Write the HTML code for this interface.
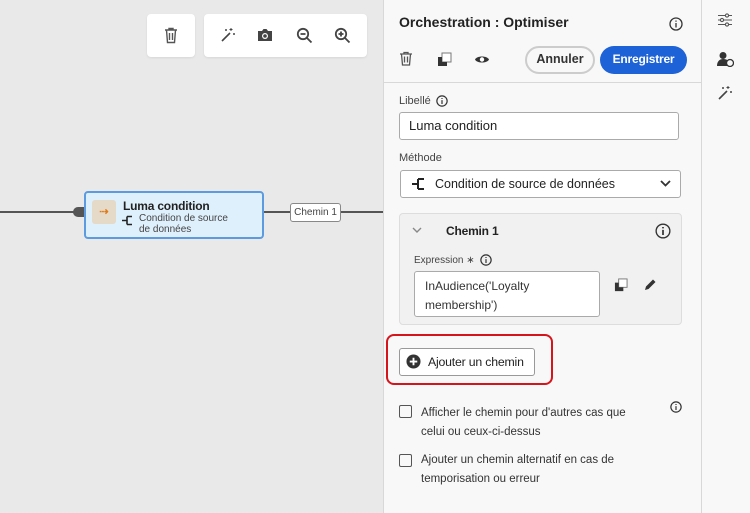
<!DOCTYPE html>
<html><head><meta charset="utf-8"><style>
*{box-sizing:border-box;margin:0;padding:0}
body{width:750px;height:513px;overflow:hidden;background:#e9e9e9;font-family:"Liberation Sans",sans-serif;color:#222;position:relative}
.a{position:absolute}
svg{display:block}
.box{background:#fff;border-radius:4px;box-shadow:0 1px 2px rgba(0,0,0,.08)}
.lbl{font-size:11px;color:#444}
.inp{background:#fff;border:1px solid #aaa;border-radius:3px}
.t13{font-size:13px;color:#222}
</style></head><body>
<div class="a box" style="left:147px;top:14px;width:48px;height:43px"></div>
<div class="a box" style="left:204px;top:14px;width:163px;height:43px"></div>
<svg class="a" style="left:163px;top:27px" width="16" height="17" viewBox="0 0 16 17" fill="none" stroke="#555" stroke-width="1.4"><path d="M2 3h12M6 3V1.5h4V3M3.5 3l1 12.5h7l1-12.5M6.5 6v7M9.5 6v7"/></svg>
<svg class="a" style="left:220px;top:27px" width="16" height="16" viewBox="0 0 16 16" fill="none" stroke="#444" stroke-width="1.6"><path d="M2 14L10 6"/><path d="M11 1v3M9.5 2.5h3M14 6v2M13 7h2M6 2v2M5 3h2" stroke-width="1"/></svg>
<svg class="a" style="left:257px;top:28px" width="16" height="14" viewBox="0 0 16 14"><path d="M1 3h4l1.5-2h3L11 3h4v10H1z" fill="#444"/><circle cx="8" cy="8" r="3" fill="#fff"/><circle cx="8" cy="8" r="1.8" fill="#444"/></svg>
<svg class="a" style="left:296px;top:27px" width="17" height="17" viewBox="0 0 17 17" fill="none" stroke="#444" stroke-width="1.8"><circle cx="7" cy="7" r="5.2"/><path d="M11 11l4.5 4.5M4.5 7h5"/></svg>
<svg class="a" style="left:334px;top:27px" width="17" height="17" viewBox="0 0 17 17" fill="none" stroke="#444" stroke-width="1.8"><circle cx="7" cy="7" r="5.2"/><path d="M11 11l4.5 4.5M4.5 7h5M7 4.5v5"/></svg>
<div class="a" style="left:0;top:211px;width:84px;height:2px;background:#555"></div>
<div class="a" style="left:263px;top:211px;width:120px;height:2px;background:#555"></div>
<div class="a" style="left:73px;top:207px;width:11px;height:10px;background:#555;border-radius:5px 0 0 5px"></div>
<div class="a" style="left:84px;top:191px;width:180px;height:48px;background:#dff0fd;border:2px solid #5d9be0;border-radius:4px"></div>
<div class="a" style="left:92px;top:200px;width:24px;height:24px;background:#e5d9c8;border-radius:3px;color:#e07b1a;font-size:11px;text-align:center;line-height:24px;font-weight:bold">⇢</div>
<div class="a" style="left:123px;top:199px;font-size:12px;font-weight:bold;color:#222;letter-spacing:-.2px">Luma condition</div>
<div class="a" style="left:139px;top:213px;font-size:10px;color:#444;line-height:11px">Condition de source<br>de données</div>
<svg class="a" style="left:122px;top:215px" width="12" height="11" viewBox="0 0 12 11" fill="none" stroke="#222" stroke-width="1.6"><path d="M0 5.5h5M5 1.5h5M5 9.5h5M5 1.5v8"/></svg>
<div class="a" style="left:290px;top:203px;width:51px;height:19px;background:#fff;border:1px solid #888;border-radius:3px;font-size:10px;color:#444;text-align:center;line-height:17px">Chemin 1</div>
<div class="a" style="left:383px;top:0;width:319px;height:513px;background:#f8f8f8;border-left:1px solid #d8d8d8"></div>
<div class="a" style="left:701px;top:0;width:49px;height:513px;background:#f8f8f8;border-left:1px solid #d8d8d8"></div>
<div class="a" style="left:399px;top:14px;font-size:14px;font-weight:bold;color:#222">Orchestration : Optimiser</div>
<svg class="a" style="left:669px;top:17px" width="14" height="14" viewBox="0 0 14 14" fill="none" stroke="#333" stroke-width="1.3"><circle cx="7" cy="7" r="6"/><path d="M7 6v4.5M7 3.5v1.2"/></svg>
<svg class="a" style="left:399px;top:51px" width="14" height="15" viewBox="0 0 14 15" fill="none" stroke="#555" stroke-width="1.3"><path d="M1 3h12M5 3V1.5h4V3M2.5 3l1 11h7l1-11M5.5 5.5v6M8.5 5.5v6"/></svg>
<svg class="a" style="left:437px;top:52px" width="15" height="15" viewBox="0 0 15 15"><rect x="5" y="1" width="9" height="9" fill="#fff" stroke="#777"/><path d="M1 5h4v5h5v4H1z" fill="#333"/></svg>
<svg class="a" style="left:474px;top:54px" width="16" height="11" viewBox="0 0 16 11"><path d="M1 5.5C3 1.5 13 1.5 15 5.5 13 9.5 3 9.5 1 5.5z" fill="#333"/><circle cx="8" cy="5.5" r="2.2" fill="#fff"/></svg>
<div class="a" style="left:525px;top:46px;width:70px;height:28px;border:2px solid #ccc;border-radius:14px;font-size:12.5px;font-weight:bold;color:#333;text-align:center;line-height:23px">Annuler</div>
<div class="a" style="left:600px;top:46px;width:87px;height:28px;background:#1d62d6;border-radius:14px;font-size:12px;font-weight:bold;color:#fff;text-align:center;line-height:27px;letter-spacing:-.2px">Enregistrer</div>
<div class="a" style="left:384px;top:82px;width:317px;height:1px;background:#d8d8d8"></div>
<div class="a lbl" style="left:399px;top:95px">Libellé</div>
<svg class="a" style="left:436px;top:95px" width="12" height="12" viewBox="0 0 14 14" fill="none" stroke="#333" stroke-width="1.4"><circle cx="7" cy="7" r="6"/><path d="M7 6v4.5M7 3.5v1.2"/></svg>
<div class="a inp" style="left:399px;top:112px;width:280px;height:28px"></div>
<div class="a t13" style="left:409px;top:118px">Luma condition</div>
<div class="a lbl" style="left:399px;top:152px">Méthode</div>
<div class="a inp" style="left:400px;top:170px;width:281px;height:28px"></div>
<svg class="a" style="left:412px;top:177px" width="14" height="14" viewBox="0 0 14 14" fill="none" stroke="#222" stroke-width="2"><path d="M0 7h6M6 2h6M6 12h6M6 2v10"/></svg>
<div class="a t13" style="left:435px;top:177px;font-size:12.5px">Condition de source de données</div>
<svg class="a" style="left:660px;top:180px" width="11" height="7" viewBox="0 0 11 7" fill="none" stroke="#333" stroke-width="1.8"><path d="M1 1l4.5 4.5L10 1"/></svg>
<div class="a" style="left:399px;top:213px;width:283px;height:112px;background:#f1f1f1;border:1px solid #ddd;border-radius:4px"></div>
<svg class="a" style="left:412px;top:227px" width="10" height="6" viewBox="0 0 10 6" fill="none" stroke="#888" stroke-width="1.4"><path d="M1 1l4 4 4-4"/></svg>
<div class="a" style="left:446px;top:224px;font-size:12px;font-weight:bold;letter-spacing:-.2px">Chemin 1</div>
<svg class="a" style="left:655px;top:223px" width="16" height="16" viewBox="0 0 14 14" fill="none" stroke="#333" stroke-width="1.2"><circle cx="7" cy="7" r="6"/><path d="M7 6v4.5M7 3.5v1.2" stroke-width="1.5"/></svg>
<div class="a" style="left:414px;top:255px;font-size:10px;color:#444">Expression ∗</div>
<svg class="a" style="left:480px;top:254px" width="12" height="12" viewBox="0 0 14 14" fill="none" stroke="#333" stroke-width="1.4"><circle cx="7" cy="7" r="6"/><path d="M7 6v4.5M7 3.5v1.2"/></svg>
<div class="a inp" style="left:414px;top:271px;width:186px;height:46px"></div>
<div class="a" style="left:425px;top:277px;font-size:12px;line-height:19px;color:#333">InAudience('Loyalty<br>membership')</div>
<svg class="a" style="left:614px;top:278px" width="14" height="14" viewBox="0 0 15 15"><rect x="5" y="1" width="9" height="9" fill="#fff" stroke="#777"/><path d="M1 5h4v5h5v4H1z" fill="#333"/></svg>
<svg class="a" style="left:643px;top:278px" width="14" height="14" viewBox="0 0 14 14"><path d="M2 12l1-3.5 7-7 2.5 2.5-7 7z" fill="#333"/></svg>
<div class="a" style="left:386px;top:334px;width:167px;height:51px;border:2px solid #d6141c;border-radius:8px"></div>
<div class="a" style="left:399px;top:348px;width:136px;height:28px;background:#fff;border:1px solid #999;border-radius:3px"></div>
<svg class="a" style="left:406px;top:354px" width="15" height="15" viewBox="0 0 16 16"><circle cx="8" cy="8" r="7.5" fill="#333"/><path d="M8 4v8M4 8h8" stroke="#fff" stroke-width="2"/></svg>
<div class="a t13" style="left:428px;top:355px;font-size:12.3px;letter-spacing:-.2px">Ajouter un chemin</div>
<div class="a" style="left:399px;top:405px;width:13px;height:13px;border:1.5px solid #555;border-radius:2px"></div>
<div class="a" style="left:421px;top:404px;font-size:11.5px;line-height:19px;color:#333">Afficher le chemin pour d'autres cas que<br>celui ou ceux-ci-dessus</div>
<svg class="a" style="left:670px;top:401px" width="12" height="12" viewBox="0 0 14 14" fill="none" stroke="#333" stroke-width="1.4"><circle cx="7" cy="7" r="6"/><path d="M7 6v4.5M7 3.5v1.2"/></svg>
<div class="a" style="left:399px;top:454px;width:13px;height:13px;border:1.5px solid #555;border-radius:2px"></div>
<div class="a" style="left:421px;top:451px;font-size:11.5px;line-height:19px;color:#333">Ajouter un chemin alternatif en cas de<br>temporisation ou erreur</div>
<svg class="a" style="left:717px;top:13px" width="16" height="14" viewBox="0 0 16 14" fill="none" stroke="#555" stroke-width="1.1"><path d="M1 2.5h14M1 7h14M1 11.5h14"/><circle cx="10" cy="2.5" r="1.6" fill="#f8f8f8"/><circle cx="5" cy="7" r="1.6" fill="#f8f8f8"/><circle cx="10" cy="11.5" r="1.6" fill="#f8f8f8"/></svg>
<svg class="a" style="left:717px;top:51px" width="17" height="16" viewBox="0 0 17 16"><circle cx="6" cy="4.5" r="3.5" fill="#333"/><path d="M0 15c0-5 3-7 6-7s5 1 6 3v4z" fill="#333"/><circle cx="13" cy="12" r="3.5" fill="#f8f8f8" stroke="#333" stroke-width="1.3"/></svg>
<svg class="a" style="left:717px;top:85px" width="16" height="16" viewBox="0 0 16 16" fill="none" stroke="#444" stroke-width="1.6"><path d="M2 14L10 6"/><path d="M11 1v3M9.5 2.5h3M14 6v2M13 7h2M6 2v2M5 3h2" stroke-width="1"/></svg>
</body></html>
